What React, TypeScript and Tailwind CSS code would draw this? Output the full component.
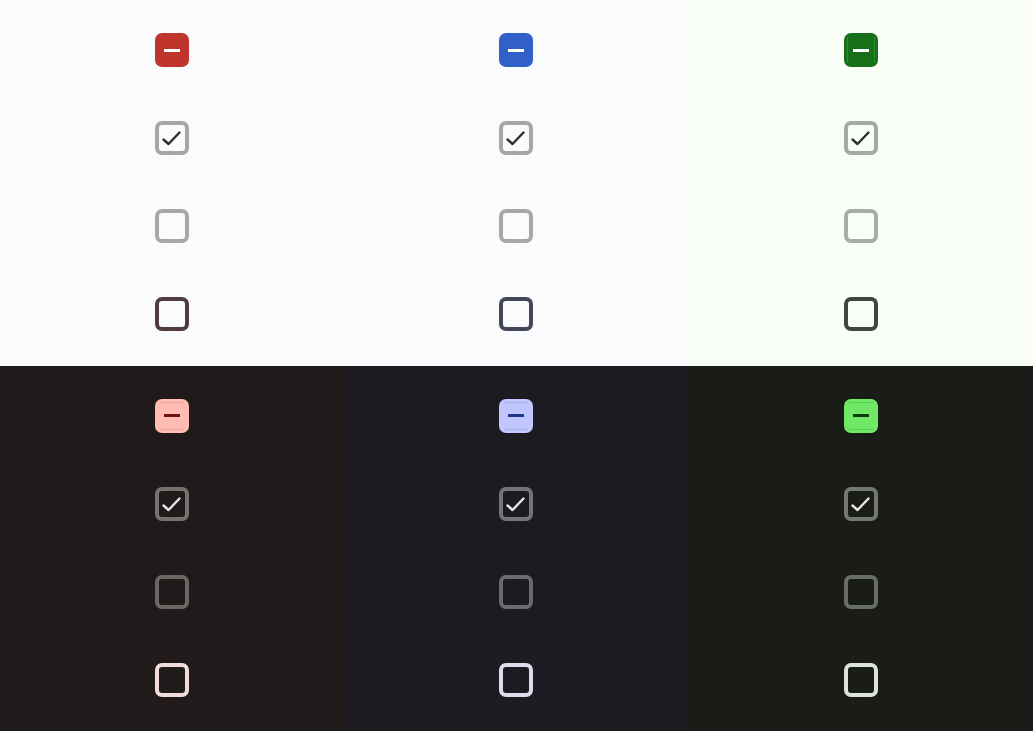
import React from "react";

type Theme = {
  bg: string;
  fill: string;
  dash: string;
  inner: string;
  checkBorder: string;
  checkColor: string;
  emptyBorder: string;
  strongBorder: string;
};

const themes: Theme[] = [
  { bg: "bg-[#fafbfd]", fill: "bg-[#c0352b]", dash: "bg-[#ffffff]", inner: "border-[#c0352b]", checkBorder: "border-[#a6a6a6]", checkColor: "#2e2e2e", emptyBorder: "border-[#a8a8a8]", strongBorder: "border-[#4f3d3d]" },
  { bg: "bg-[#fafbfd]", fill: "bg-[#3060c8]", dash: "bg-[#ffffff]", inner: "border-[#3060c8]", checkBorder: "border-[#a6a6a6]", checkColor: "#2e2e2e", emptyBorder: "border-[#a8a8a8]", strongBorder: "border-[#46465a]" },
  { bg: "bg-[#f8fdf6]", fill: "bg-[#16701a]", dash: "bg-[#ffffff]", inner: "border-[#2f8a31]", checkBorder: "border-[#a6aaa6]", checkColor: "#2e2e2e", emptyBorder: "border-[#a8aca8]", strongBorder: "border-[#3f463f]" },
  { bg: "bg-[#201a1a]", fill: "bg-[#ffbcb2]", dash: "bg-[#6e1410]", inner: "border-[#f0a399]", checkBorder: "border-[#76706f]", checkColor: "#e8e4e4", emptyBorder: "border-[#6b6564]", strongBorder: "border-[#f1dcdb]" },
  { bg: "bg-[#1c1b21]", fill: "bg-[#c2c6ff]", dash: "bg-[#1f3a8a]", inner: "border-[#aab0ec]", checkBorder: "border-[#76747a]", checkColor: "#e8e8ee", emptyBorder: "border-[#6b6a70]", strongBorder: "border-[#dedcec]" },
  { bg: "bg-[#1a1c18]", fill: "bg-[#70e866]", dash: "bg-[#0b3a0b]", inner: "border-[#5fcc57]", checkBorder: "border-[#747872]", checkColor: "#e6e8e4", emptyBorder: "border-[#696d67]", strongBorder: "border-[#dde3dc]" },
];

function Indeterminate({ t, dark, vertical }: { t: Theme; dark: boolean; vertical: boolean }) {
  return (
    <div className={`relative w-[34px] h-[34px] rounded-[7px] ${t.fill} flex items-center justify-center`}>
      {dark && <div className={`absolute inset-x-[5px] inset-y-[3px] border-y ${t.inner}`} />}
      {vertical && <div className={`absolute inset-y-[4px] inset-x-[3px] border-x ${t.inner}`} />}
      <div className={`relative w-[16px] h-[3px] ${t.dash}`} />
    </div>
  );
}

function Checked({ t }: { t: Theme }) {
  return (
    <div className={`w-[34px] h-[34px] rounded-[7px] border-4 ${t.checkBorder} flex items-center justify-center`}>
      <svg width="26" height="26" viewBox="0 0 26 26">
        <path d="M4.5 14.5 L9.5 19 L20.5 7.5" fill="none" stroke={t.checkColor} strokeWidth="2.4" strokeLinecap="round" strokeLinejoin="round" />
      </svg>
    </div>
  );
}

function Empty({ border }: { border: string }) {
  return <div className={`w-[34px] h-[34px] rounded-[7px] border-4 ${border}`} />;
}

export default function App() {
  return (
    <div className="grid grid-cols-3 grid-rows-2 w-[1033px] h-[731px] overflow-hidden">
      {themes.map((t, i) => (
        <div key={i} className={`${t.bg} flex flex-col items-center pt-[33px] gap-[54px]`}>
          <Indeterminate t={t} dark={i >= 3} vertical={i === 2} />
          <Checked t={t} />
          <Empty border={t.emptyBorder} />
          <Empty border={t.strongBorder} />
        </div>
      ))}
    </div>
  );
}
